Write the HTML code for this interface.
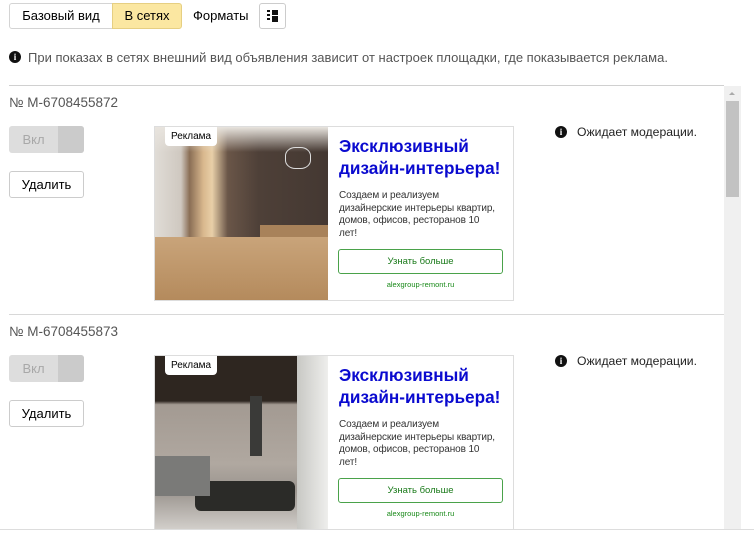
<!DOCTYPE html>
<html><head><meta charset="utf-8"><style>
*{box-sizing:border-box;margin:0;padding:0}
html,body{width:754px;height:534px;overflow:hidden}
body{background:#fff;font-family:"Liberation Sans",Arial,sans-serif;color:#000;position:relative}
.a{position:absolute}
.seg{top:3px;height:26px;border:1px solid #d4d4d4;font-size:13px;line-height:24px;text-align:center}
.tog{width:75px;height:27px;border-radius:3px;background:#ddd;overflow:hidden}
.tog i{position:absolute;right:0;top:0;width:26px;height:27px;background:#cbcbcb}
.tog span{position:absolute;left:0;width:49px;text-align:center;line-height:27px;font-size:13px;color:#a8a8a8}
.del{width:75px;height:27px;border:1px solid #ccc;border-radius:3px;font-size:13px;line-height:25px;text-align:center}
.num{font-size:13.5px;color:#555}
.ad{width:360px;border:1px solid #ddd;background:#fff;overflow:hidden}
.img{left:0;top:0;width:173px;height:174px;overflow:hidden}
.lab{left:10px;top:0;background:#fff;border-radius:0 0 4px 4px;font-size:10px;padding:4px 6px;line-height:11px}
.t{left:184px;top:8px;font-size:17.2px;font-weight:bold;color:#0a0acf;line-height:22px;white-space:nowrap}
.b{left:184px;top:63px;font-size:10px;line-height:12.5px;color:#333;width:168px;letter-spacing:-0.1px}
.btn{left:183px;top:122px;width:165px;height:25px;border:1px solid #4aa24a;border-radius:3px;font-size:9.5px;color:#1a7a1a;text-align:center;line-height:23px}
.dom{left:183px;top:153px;width:165px;text-align:center;font-size:7.5px;color:#1a8a1a}
.info{width:12px;height:12px;border-radius:50%;background:#111;color:#fff;font-size:9px;font-weight:bold;text-align:center;line-height:12px;font-family:"Liberation Serif",serif}
.st{font-size:12.2px;color:#222}
</style></head><body>
<div class="a seg" style="left:9px;width:104px;border-radius:3px 0 0 3px">Базовый вид</div>
<div class="a seg" style="left:112px;width:70px;background:#fbe7a1;border-color:#e6cf82;border-radius:0 3px 3px 0">В сетях</div>
<div class="a" style="left:193px;top:3px;font-size:13px;line-height:26px">Форматы</div>
<div class="a" style="left:259px;top:3px;width:27px;height:26px;border:1px solid #ccc;border-radius:3px">
<svg width="27" height="26" style="position:absolute;left:-1px;top:-1px"><rect x="8" y="7" width="3" height="2" fill="#111"/><rect x="8" y="11" width="3" height="2" fill="#111"/><rect x="8" y="15" width="3" height="2" fill="#111"/><rect x="13" y="7" width="6" height="5" fill="#111"/><rect x="13" y="13" width="6" height="6" fill="#111"/></svg></div>
<div class="a info" style="left:9px;top:51px">i</div>
<div class="a" style="left:28px;top:50px;font-size:13px;color:#555;white-space:nowrap">При показах в сетях внешний вид объявления зависит от настроек площадки, где показывается реклама.</div>
<div class="a" style="left:9px;top:85px;width:715px;height:1px;background:#d0d0d0"></div>
<div class="a" style="left:724px;top:86px;width:17px;height:443px;background:#f0f0f0"></div>
<div class="a" style="left:726px;top:101px;width:13px;height:96px;background:#c2c2c2"></div>
<div class="a" style="left:729px;top:92px;width:0;height:0;border:3px solid transparent;border-bottom:3px solid #aaa;border-top:0"></div>

<div class="a num" style="left:9px;top:95px">№ M-6708455872</div>
<div class="a tog" style="left:9px;top:126px"><span>Вкл</span><i></i></div>
<div class="a del" style="left:9px;top:171px">Удалить</div>
<div class="a ad" style="left:154px;top:126px;height:175px">
<div class="a img" style="background:linear-gradient(90deg,#e0dcd6 0%,#cfc8c0 15%,#8a6e55 20%,#d9b88e 28%,#e8cfa8 33%,#6a5648 42%,#4e4038 60%,#443832 100%);">
<div class="a" style="left:0;top:0;width:173px;height:25px;background:linear-gradient(180deg,#e8e4de,rgba(232,228,222,0))"></div>
<div class="a" style="left:0;top:110px;width:173px;height:64px;background:linear-gradient(180deg,#c9a47a,#b48a5c)"></div>
<div class="a" style="left:105px;top:98px;width:68px;height:12px;background:#a8825a"></div>
<div class="a" style="left:130px;top:20px;width:26px;height:22px;border:1px solid #ddd;border-radius:40%"></div>
<div class="a lab">Реклама</div></div>
<div class="a t">Эксклюзивный<br>дизайн-интерьера!</div>
<div class="a b">Создаем и реализуем<br>дизайнерские интерьеры квартир,<br>домов, офисов, ресторанов 10<br>лет!</div>
<div class="a btn">Узнать больше</div>
<div class="a dom">alexgroup-remont.ru</div>
</div>
<div class="a info" style="left:555px;top:126px">i</div>
<div class="a st" style="left:577px;top:125px">Ожидает модерации.</div>

<div class="a" style="left:9px;top:314px;width:715px;height:1px;background:#d8d8d8"></div>

<div class="a num" style="left:9px;top:324px">№ M-6708455873</div>
<div class="a tog" style="left:9px;top:355px"><span>Вкл</span><i></i></div>
<div class="a del" style="left:9px;top:400px">Удалить</div>
<div class="a ad" style="left:154px;top:355px;height:174px;border-bottom:0">
<div class="a img" style="height:180px;background:linear-gradient(180deg,#2e2620 0%,#2e2620 25%,#a39a92 27%,#b0a8a0 60%,#9a948e 75%,#dcd9d5 100%)">
<div class="a" style="left:142px;top:0;width:31px;height:180px;background:linear-gradient(90deg,#c8c8c4,#eeeeec)"></div>
<div class="a" style="left:95px;top:40px;width:12px;height:60px;background:#3a3a38"></div>
<div class="a" style="left:40px;top:125px;width:100px;height:30px;background:#2b2b28;border-radius:6px"></div>
<div class="a" style="left:0;top:100px;width:55px;height:40px;background:#7a7a78"></div>
<div class="a lab">Реклама</div></div>
<div class="a t">Эксклюзивный<br>дизайн-интерьера!</div>
<div class="a b">Создаем и реализуем<br>дизайнерские интерьеры квартир,<br>домов, офисов, ресторанов 10<br>лет!</div>
<div class="a btn">Узнать больше</div>
<div class="a dom">alexgroup-remont.ru</div>
</div>
<div class="a info" style="left:555px;top:355px">i</div>
<div class="a st" style="left:577px;top:354px">Ожидает модерации.</div>
<div class="a" style="left:0;top:529px;width:754px;height:5px;background:#fff;border-top:1px solid #ddd"></div>
</body></html>
